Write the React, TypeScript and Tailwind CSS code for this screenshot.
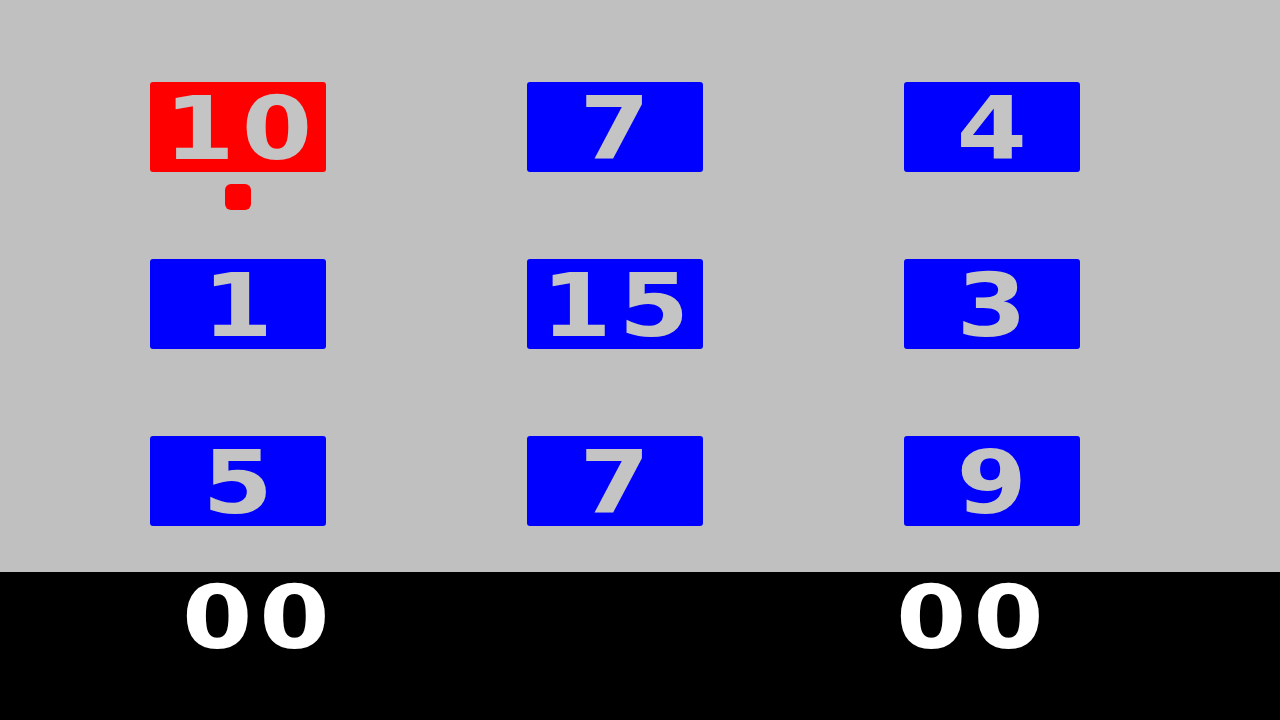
const tiles = [10, 7, 4, 1, 15, 3, 5, 7, 9];
const selected = 0;

function Tile({ value, active }: { value: number; active: boolean }) {
    return (
        <div className="relative">
            <div
                className={`flex h-[90px] w-[176px] items-center justify-center rounded-[3px] pt-[3px] ${
                    active ? 'bg-[#ff0000]' : 'bg-[#0000ff]'
                }`}
            >
                <span className="inline-block scale-x-[1.15] pl-[6px] text-[88px] font-bold leading-none tracking-[6px] text-[#c4c4c4] [font-family:'DejaVu_Sans',sans-serif]">
                    {value}
                </span>
            </div>
            {/* cursor marker under the current tile */}
            {active && (
                <div className="absolute left-[75px] top-[102px] h-[26px] w-[26px] rounded-[6px] bg-[#ff0000]" />
            )}
        </div>
    );
}

export default function App() {
    return (
        <div className="flex h-[720px] w-[1280px] flex-col overflow-hidden bg-black">
            <div className="h-[572px] bg-[#c0c0c0] pl-[150px] pt-[82px]">
                <div className="grid grid-cols-[176px_176px_176px] gap-x-[201px] gap-y-[87px]">
                    {tiles.map((n, i) => (
                        <Tile key={i} value={n} active={i === selected} />
                    ))}
                </div>
            </div>
            <div className="flex pt-[2px] text-[88px] font-bold leading-none tracking-[6px] text-white [font-family:'DejaVu_Sans',sans-serif]">
                <span className="ml-[182px] inline-block origin-left scale-x-[1.15]">00</span>
                <span className="ml-[580px] inline-block origin-left scale-x-[1.15]">00</span>
            </div>
        </div>
    );
}
